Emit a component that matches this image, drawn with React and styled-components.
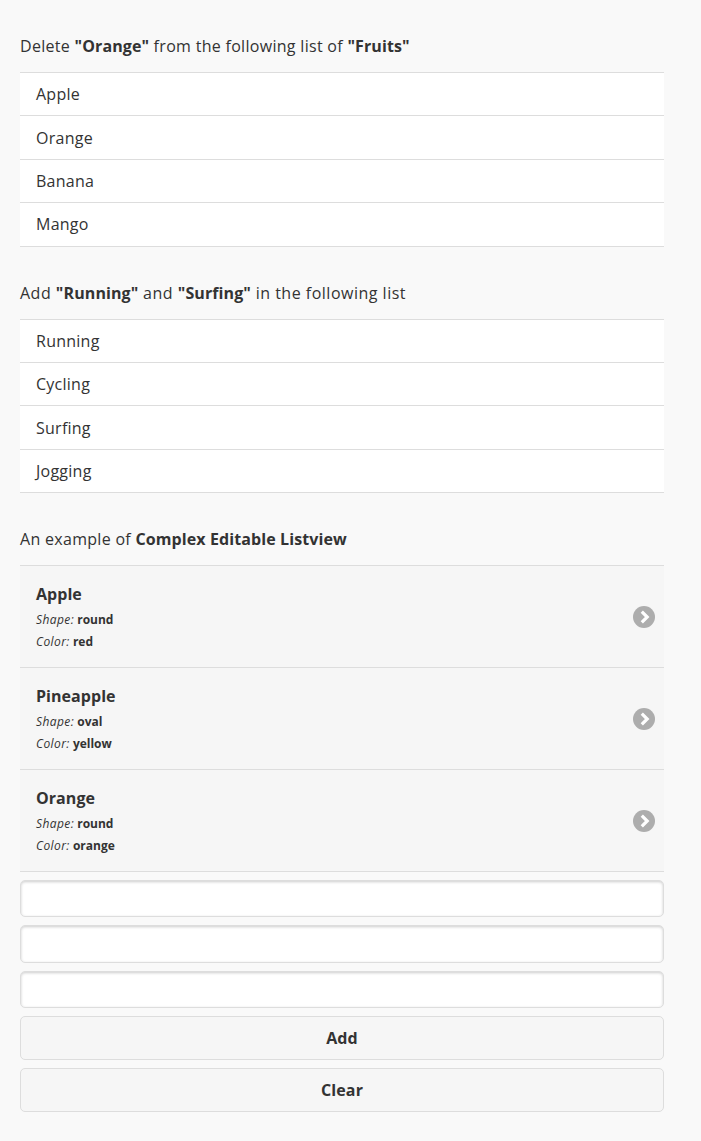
import React from 'react';
import styled, { createGlobalStyle } from 'styled-components';

const GlobalStyle = createGlobalStyle`
  html, body {
    margin: 0;
    background: #f9f9f9;
  }
  body {
    font-family: 'Open Sans', 'Noto Sans', sans-serif;
    font-size: 16px;
    color: #333;
  }
`;

const Page = styled.div`
  width: 644px;
  padding: 35px 37px 20px 20px;
`;

const Heading = styled.p`
  margin: 0 0 15px;
  height: 22px;
  line-height: 22px;
  font-size: 16px;
  letter-spacing: ${(p) => p.$tracking || '0.3px'};
  b { font-weight: 700; letter-spacing: 0.1px; }
`;

const List = styled.ul`
  list-style: none;
  margin: 0 0 35px;
  padding: 0;
  border-bottom: 1px solid #ddd;
`;

const Row = styled.li`
  box-sizing: border-box;
  height: 43.4px;
  display: flex;
  align-items: center;
  padding: 0 16px;
  background: #fff;
  border-top: 1px solid #ddd;
  letter-spacing: 0.25px;
`;

const DetailRow = styled.li`
  box-sizing: border-box;
  height: 102px;
  display: flex;
  align-items: center;
  justify-content: space-between;
  padding: 1px 9px 0 16px;
  background: #f6f6f6;
  border-top: 1px solid #ddd;
`;

const DetailText = styled.div`
  margin-top: 1px;
`;

const Name = styled.div`
  font-size: 16px;
  font-weight: 700;
  line-height: 22px;
  letter-spacing: 0.05px;
  margin-bottom: 4px;
`;

const Attr = styled.div`
  font-size: 12px;
  line-height: 22px;
  i { font-weight: 400; letter-spacing: 0.4px; }
  b { font-weight: 700; }
`;

const Chevron = styled.svg`
  width: 22px;
  height: 22px;
  display: block;
`;

const DetailList = styled(List)`
  margin-bottom: 8px;
`;

const Field = styled.input`
  display: block;
  box-sizing: border-box;
  width: 100%;
  height: 37.33px;
  margin: 0 0 8px;
  padding: 0 8px;
  background: #fff;
  border: 1px solid #ddd;
  border-radius: 5px;
  box-shadow: inset 0 1px 3px rgba(0, 0, 0, 0.2);
  outline: none;
`;

const Button = styled.button`
  display: block;
  box-sizing: border-box;
  width: 100%;
  height: 44px;
  margin: 0 0 8px;
  background: #f6f6f6;
  border: 1px solid #ddd;
  border-radius: 5px;
  font-family: inherit;
  font-size: 16px;
  font-weight: 700;
  color: #333;
  letter-spacing: 0.15px;
`;

const ArrowIcon = () => (
  <Chevron viewBox="0 0 22 22">
    <circle cx="11" cy="11" r="11" fill="#adadad" />
    <path d="M8.8 5.6 L14.2 11 L8.8 16.4" fill="none" stroke="#fff" strokeWidth="3.2" />
  </Chevron>
);

const fruits = [
  { name: 'Apple', shape: 'round', color: 'red' },
  { name: 'Pineapple', shape: 'oval', color: 'yellow' },
  { name: 'Orange', shape: 'round', color: 'orange' },
];

const App = () => (
  <Page>
    <GlobalStyle />
    <Heading>Delete <b>"Orange"</b> from the following list of <b>"Fruits"</b></Heading>
    <List>
      {['Apple', 'Orange', 'Banana', 'Mango'].map((item) => <Row key={item}>{item}</Row>)}
    </List>
    <Heading $tracking="0.5px">Add <b>"Running"</b> and <b>"Surfing"</b> in the following list</Heading>
    <List>
      {['Running', 'Cycling', 'Surfing', 'Jogging'].map((item) => <Row key={item}>{item}</Row>)}
    </List>
    <Heading>An example of <b>Complex Editable Listview</b></Heading>
    <DetailList>
      {fruits.map((fruit) => (
        <DetailRow key={fruit.name}>
          <DetailText>
            <Name>{fruit.name}</Name>
            <Attr><i>Shape:</i> <b>{fruit.shape}</b></Attr>
            <Attr><i>Color:</i> <b>{fruit.color}</b></Attr>
          </DetailText>
          <ArrowIcon />
        </DetailRow>
      ))}
    </DetailList>
    <Field />
    <Field />
    <Field />
    <Button>Add</Button>
    <Button>Clear</Button>
  </Page>
);

export default App;
